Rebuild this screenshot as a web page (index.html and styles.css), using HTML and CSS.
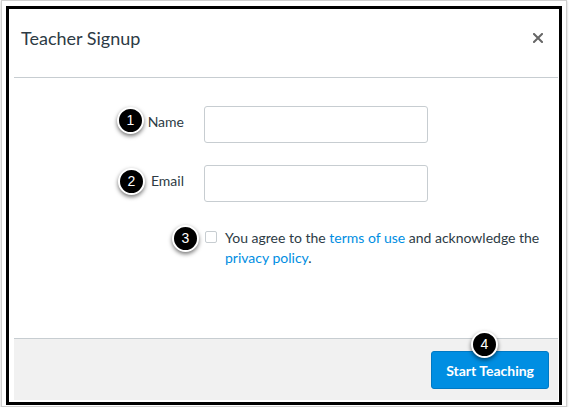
FILE: index.html
```html
<!DOCTYPE html>
<html lang="en">
<head>
<meta charset="utf-8">
<title>Teacher Signup</title>
<link rel="stylesheet" href="styles.css">
</head>
<body>
<div class="screen">
  <div class="frame">
    <div class="dialog">
      <header class="dlg-head">
        <h1 class="dlg-title">Teacher Signup</h1>
        <button class="close" aria-label="Close">
          <svg width="10" height="10" viewBox="0 0 10 10"><path d="M1 1L9 9M9 1L1 9" stroke="#666" stroke-width="2" stroke-linecap="square"/></svg>
        </button>
      </header>
      <div class="dlg-body">
        <div class="field">
          <label class="field-label" for="name">Name</label>
          <input class="field-input" id="name" type="text">
        </div>
        <div class="field">
          <label class="field-label" for="email">Email</label>
          <input class="field-input" id="email" type="email">
        </div>
        <div class="agree">
          <input class="check" type="checkbox" id="agree">
          <p class="agree-text">You agree to the <a href="#">terms of use</a> and acknowledge the <a href="#">privacy policy</a>.</p>
        </div>
      </div>
      <footer class="dlg-foot">
        <button class="primary">Start Teaching</button>
      </footer>
      <span class="badge b1">1</span>
      <span class="badge b2">2</span>
      <span class="badge b3">3</span>
      <span class="badge b4">4</span>
    </div>
  </div>
</div>
</body>
</html>
```

FILE: styles.css
```css
* { box-sizing: border-box; }
html, body { margin: 0; padding: 0; background: #fff; }
body {
  font-family: Lato, "Liberation Sans", sans-serif;
  color: #2d3b45;
}
.screen {
  width: 566px;
  height: 407px;
  margin-left: 1px;
  border: 1px solid #cfcfcf;
  box-shadow: 0 1px 2px rgba(0,0,0,0.25);
  padding: 5px 4px 1px 4px;
  display: flex;
}
.frame {
  flex: 1;
  min-width: 0;
  border: 3px solid #000;
  padding: 3px 1px 2px 5px;
  display: flex;
}
.dialog {
  flex: 1;
  min-width: 0;
  position: relative;
  display: flex;
  flex-direction: column;
  background: #fff;
}
.dlg-head {
  height: 66px;
  border-bottom: 1px solid #c7cdd1;
  display: flex;
  justify-content: space-between;
  align-items: flex-start;
  padding: 14px 15px 0 7px;
}
.dlg-title {
  margin: 0;
  font-size: 18px;
  line-height: 24px;
  font-weight: 400;
  color: #2d3b45;
}
.close {
  border: 0;
  background: none;
  padding: 0;
  margin-top: 7px;
  width: 10px;
  height: 10px;
  display: flex;
}
.dlg-body {
  flex: 1;
  padding-top: 28px;
  display: flex;
  flex-direction: column;
}
.field {
  display: flex;
  align-items: center;
  gap: 20px;
  margin-bottom: 22px;
}
.field-label {
  width: 170px;
  text-align: right;
  font-size: 14px;
  line-height: 20px;
  margin-top: -6px;
}
.field-input {
  width: 224px;
  height: 37px;
  border: 1px solid #c7cdd1;
  border-radius: 3px;
  background: #fff;
  font: inherit;
}
.agree {
  display: flex;
  align-items: flex-start;
  gap: 8px;
  padding-left: 191px;
  margin-top: 4px;
}
.check {
  -webkit-appearance: none;
  appearance: none;
  margin: 3px 0 0 0;
  width: 12px;
  height: 12px;
  border: 1px solid #c7cdd1;
  border-radius: 2px;
  background: #fff;
  flex: none;
}
.agree-text {
  margin: 0;
  font-size: 14px;
  line-height: 20px;
  width: 325px;
}
.agree-text a {
  color: #008ee2;
  text-decoration: none;
}
.dlg-foot {
  height: 62px;
  border-top: 1px solid #c7cdd1;
  background: #f1f1f1;
  display: flex;
  justify-content: flex-end;
  align-items: flex-start;
  padding: 12px 9px 0 0;
}
.primary {
  height: 38px;
  padding: 0 14px;
  background: #008ee2;
  border: 1px solid #0079c4;
  border-radius: 3px;
  color: #fff;
  font-family: Lato, "Liberation Sans", sans-serif;
  font-weight: 700;
  font-size: 14px;
}
.badge {
  position: absolute;
  width: 27px;
  height: 27px;
  border-radius: 50%;
  background: #000;
  border: 2px solid #fff;
  box-shadow: 0 2px 4px rgba(0,0,0,0.55);
  color: #fff;
  font-family: "Liberation Sans", Arial, sans-serif;
  font-size: 14px;
  line-height: 23px;
  text-align: center;
}
.b1 { left: 103px; top: 95px; }
.b2 { left: 104px; top: 156px; }
.b3 { left: 158px; top: 213px; }
.b4 { left: 457px; top: 319px; }
```
